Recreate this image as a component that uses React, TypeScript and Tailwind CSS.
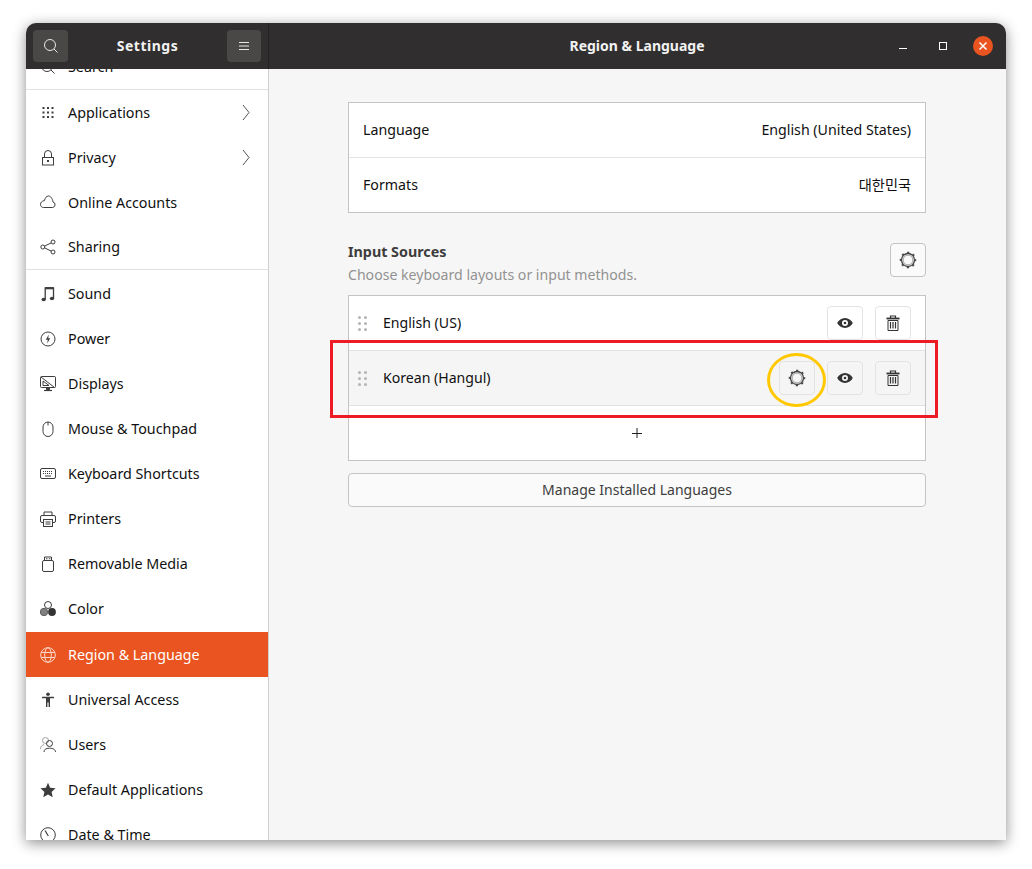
import type { ReactNode } from "react";

const FONT = "font-['Noto_Sans','Noto_Sans_CJK_KR',sans-serif]";

function Ico({ children, className = "text-[#3d3d3d]" }: { children: ReactNode; className?: string }) {
  return (
    <svg width="16" height="16" viewBox="0 0 16 16" fill="none" stroke="currentColor" strokeWidth="1" className={`shrink-0 ${className}`}>
      {children}
    </svg>
  );
}

const icons: Record<string, ReactNode> = {
  search: (
    <>
      <circle cx="7" cy="7" r="5.500" />
      <path d="M11 11l3.500 3.500" />
    </>
  ),
  grid: (
    <g fill="currentColor" stroke="none">
      {[2, 6.500, 11].map((y) =>
        [2.500, 7, 11.500].map((x) => <rect key={`${x}-${y}`} x={x} y={y} width="2" height="2" />)
      )}
    </g>
  ),
  lock: (
    <>
      <rect x="2.500" y="7.500" width="11" height="7.500" />
      <path d="M4.500 7.500V4a3.500 3.500 0 0 1 7 0v3.500" />
      <rect x="7" y="10" width="2" height="2" fill="currentColor" stroke="none" />
    </>
  ),
  cloud: <path d="M3.500 12.500h9a2.800 2.800 0 0 0 .5-5.500C12.500 3.500 10.500 1 8.500 1 6.500 1 5 3 4.500 5.500 2 6 .5 7.500.5 9.300c0 2 1.300 3.200 3 3.200Z" />,
  share: (
    <>
      <circle cx="2.800" cy="8" r="2" />
      <circle cx="13" cy="3" r="2" />
      <circle cx="13" cy="13" r="2" />
      <path d="M4.600 7.100 11.200 3.900M4.600 8.900l6.600 3.200" />
    </>
  ),
  music: (
    <>
      <path d="M5.200 13V2h8.300v10" strokeWidth="1.300" />
      <path d="M5.200 2.200h8.300" strokeWidth="2.200" />
      <ellipse cx="3.700" cy="13.500" rx="2.200" ry="1.800" fill="currentColor" stroke="none" />
      <ellipse cx="12" cy="12.500" rx="2.200" ry="1.800" fill="currentColor" stroke="none" />
    </>
  ),
  power: (
    <>
      <circle cx="8" cy="8" r="7" />
      <path d="M8.800 3.500 5.800 8.800h2L7.200 12.500 10.200 7.200h-2Z" fill="currentColor" stroke="none" />
    </>
  ),
  display: (
    <>
      <rect x="0.500" y="0.500" width="15" height="11" rx="1" />
      <path d="M1 1l13.500 10.500M3 5v4.500h6Z" />
      <path d="M6.500 13.500h3V12h-3Z" fill="currentColor" />
      <path d="M4 14.500h8" strokeWidth="1.200" />
    </>
  ),
  mouse: (
    <>
      <rect x="3" y="1" width="10" height="14.500" rx="5" />
      <path d="M8 1v3.500" />
    </>
  ),
  keyboard: (
    <>
      <rect x="0.500" y="2.500" width="15" height="10" rx="1.500" />
      <path d="M3 5.500h10M3 7.500h10" strokeDasharray="1 1" />
      <path d="M5 10h6" />
    </>
  ),
  printer: (
    <>
      <path d="M4 4.500V1h8v3.500" />
      <rect x="0.500" y="4.500" width="15" height="7" rx="1.500" />
      <rect x="3.500" y="8.500" width="9" height="7" fill="#fff" />
      <path d="M5.500 11h5M5.500 13h5" />
    </>
  ),
  usb: (
    <>
      <rect x="2.500" y="4.500" width="11" height="11" rx="1.500" />
      <path d="M4.500 4.500V1h7v3.500" />
      <path d="M6 2.800h1.500M8.800 2.800h1.500" />
    </>
  ),
  color: (
    <>
      <circle cx="8" cy="4" r="3.500" />
      <circle cx="4" cy="11" r="3.700" fill="#808080" stroke="#5f5f5f" />
      <circle cx="12" cy="11" r="3.900" fill="#333333" stroke="none" />
    </>
  ),
  globe: (
    <>
      <circle cx="8" cy="8" r="7.300" />
      <ellipse cx="8" cy="8" rx="3.300" ry="7.300" />
      <path d="M1.200 5.500h13.600M1.200 10.500h13.600" />
    </>
  ),
  access: (
    <g fill="currentColor" stroke="none">
      <circle cx="8" cy="2.200" r="1.800" />
      <path d="M2 4.800h12v1.400H10V15H8.600v-4.500H7.400V15H6V6.200H2Z" />
    </g>
  ),
  users: (
    <>
      <circle cx="5.500" cy="3.500" r="3" stroke="#a0a0a0" />
      <path d="M0.500 12c0-2.500 1.500-4 3.500-4.300" stroke="#a0a0a0" />
      <circle cx="9.500" cy="6.500" r="3" />
      <path d="M4 15c0-2.500 2-3.800 5.500-3.800S15.500 12.500 15.500 15" />
    </>
  ),
  star: <path d="M8 .8l2.200 4.900 5.300.6-3.900 3.600 1.100 5.300L8 12.500l-4.700 2.700 1.100-5.300L.5 6.300l5.300-.6Z" fill="currentColor" stroke="none" />,
  clock: (
    <>
      <circle cx="8" cy="8" r="7.300" />
      <path d="M5 3.500l3.300 5.500" strokeWidth="1.200" />
    </>
  ),
};

function Chevron() {
  return (
    <svg width="8" height="17" viewBox="0 0 8 17" fill="none" stroke="#555555" className="shrink-0">
      <path d="M1 1l6 7.500-6 7.500" />
    </svg>
  );
}

function Row({ label, icon, arrow, active, line }: { label: string; icon: string; arrow?: boolean; active?: boolean; line?: boolean }) {
  return (
    <div
      className={`flex shrink-0 items-center pl-[14px] pr-[18px] text-[14.3px] ${
        active ? "h-[46px] border-t border-white bg-[#e95420] text-white" : "h-[45px] text-[#101010]"
      } ${line ? "border-b border-[#e1e1e1]" : ""}`}
    >
      <Ico className={active ? "text-[#fbd9cb]" : "text-[#3d3d3d]"}>{icons[icon]}</Ico>
      <span className="ml-[12px] flex-1">{label}</span>
      {arrow && <Chevron />}
    </div>
  );
}

function Gear() {
  return (
    <svg width="18" height="18" viewBox="0 0 18 18" fill="none" className="shrink-0">
      <circle cx="9" cy="9" r="6.500" stroke="#454545" strokeWidth="1.300" />
      <circle cx="9" cy="9" r="4.900" stroke="#a0a0a0" strokeWidth="1" />
      <circle cx="9" cy="9" r="7.500" stroke="#454545" strokeWidth="1.500" strokeDasharray="2.200 3.690" strokeDashoffset="1.100" />
    </svg>
  );
}

function Eye() {
  return (
    <svg width="16" height="16" viewBox="0 0 16 16" className="text-[#333333]">
      <path fillRule="evenodd" fill="currentColor" d="M8 3c3.500 0 6.300 2.300 7.800 5-1.500 2.700-4.300 5-7.800 5S1.700 10.700.2 8C1.700 5.300 4.500 3 8 3Zm0 2a3 3 0 1 0 0 6 3 3 0 0 0 0-6Zm0 1.700a1.300 1.300 0 1 1 0 2.600 1.300 1.300 0 0 1 0-2.600Z" />
    </svg>
  );
}

function Trash() {
  return (
    <svg width="16" height="16" viewBox="0 0 16 16" fill="none" stroke="#333333" className="shrink-0">
      <path d="M1.500 3.500h13" strokeWidth="1.800" />
      <path d="M5.500 3V1h5v2" strokeWidth="1.200" />
      <path d="M3 5.500h10V15.500H3Z" />
      <path d="M5.500 7v6.500M8 7v6.500M10.500 7v6.500" strokeWidth="1.200" />
    </svg>
  );
}

function IconBtn({ children }: { children: ReactNode }) {
  return (
    <div className="flex h-[34px] w-[36px] items-center justify-center rounded-[4px] border border-[#e3e3e3]">
      {children}
    </div>
  );
}

function Grip() {
  return (
    <div className="grid w-[9px] grid-cols-2 gap-x-[3px] gap-y-[3px]">
      {[0, 1, 2, 3, 4, 5].map((i) => (
        <div key={i} className="h-[3px] w-[3px] rounded-full bg-[#b4b4b4]" />
      ))}
    </div>
  );
}

function SourceRow({ label, gear, hover }: { label: string; gear?: boolean; hover?: boolean }) {
  return (
    <div className={`flex h-[55px] items-center pl-[9px] pr-[14px] ${hover ? "border-b border-[#e3e3e3] bg-[#f5f5f5]" : "border-b border-[#e3e3e3]"}`}>
      <Grip />
      <span className="ml-[16px] flex-1 text-[14.1px] text-[#101010]">{label}</span>
      <div className="flex gap-[12px]">
        {gear && (
          <IconBtn>
            <Gear />
          </IconBtn>
        )}
        <IconBtn>
          <Eye />
        </IconBtn>
        <IconBtn>
          <Trash />
        </IconBtn>
      </div>
    </div>
  );
}

export default function App() {
  return (
    <div className={`relative h-[869px] w-[1032px] overflow-hidden bg-white pl-[26px] pt-[23px] ${FONT}`}>
      <div className="flex h-[817px] w-[980px] flex-col overflow-hidden rounded-t-[10px] bg-[#f6f6f6] shadow-[0_3px_14px_rgba(0,0,0,0.45)]">
        {/* title bar */}
        <div className="flex h-[46px] shrink-0 bg-[#302e2e] text-white">
          <div className="flex w-[243px] items-center justify-between border-r border-[#222222] px-[7px]">
            <div className="flex h-[32px] w-[35px] items-center justify-center rounded-[4px] bg-[#4a4847]">
              <Ico className="text-[#e8e8e8]">{icons.search}</Ico>
            </div>
            <span className="pb-[2px] text-[14px] font-bold tracking-[0.5px] text-[#f2f2f2]">Settings</span>
            <div className="flex h-[32px] w-[34px] items-center justify-center rounded-[4px] bg-[#4a4847]">
              <svg width="12" height="10" viewBox="0 0 12 10" stroke="#e8e8e8">
                <path d="M1 1.500h10M1 5h10M1 8.500h10" />
              </svg>
            </div>
          </div>
          <div className="flex flex-1 items-center pl-[253px] pr-[13px]">
            <span className="w-[230px] pb-[2px] text-center text-[14px] font-bold text-[#f2f2f2]">Region &amp; Language</span>
            <div className="ml-auto flex items-center">
              <div className="mt-[5px] h-px w-[8px] bg-white" />
              <div className="ml-[32px] h-[8px] w-[8px] border border-white" />
              <div className="ml-[26px] flex h-[20px] w-[20px] items-center justify-center rounded-full bg-[#e95420]">
                <svg width="10" height="10" viewBox="0 0 10 10" stroke="#fff" strokeWidth="1.500">
                  <path d="M1.500 1.500l7 7M8.500 1.500l-7 7" />
                </svg>
              </div>
            </div>
          </div>
        </div>

        <div className="flex min-h-0 flex-1">
          {/* sidebar */}
          <div className="flex w-[243px] shrink-0 flex-col overflow-hidden border-r border-[#cfcfcf] bg-white">
            <div className="mt-[-24px] flex flex-col">
              <Row label="Search" icon="search" line />
              <Row label="Applications" icon="grid" arrow />
              <Row label="Privacy" icon="lock" arrow />
              <Row label="Online Accounts" icon="cloud" />
              <div className="h-[46px] shrink-0">
                <Row label="Sharing" icon="share" line />
              </div>
              <Row label="Sound" icon="music" />
              <Row label="Power" icon="power" />
              <Row label="Displays" icon="display" />
              <Row label="Mouse & Touchpad" icon="mouse" />
              <Row label="Keyboard Shortcuts" icon="keyboard" />
              <Row label="Printers" icon="printer" />
              <Row label="Removable Media" icon="usb" />
              <Row label="Color" icon="color" />
              <Row label="Region & Language" icon="globe" active />
              <Row label="Universal Access" icon="access" />
              <Row label="Users" icon="users" />
              <Row label="Default Applications" icon="star" />
              <Row label="Date & Time" icon="clock" />
            </div>
          </div>

          {/* content */}
          <div className="ml-[79px] w-[578px] shrink-0 pt-[33px]">
            <div className="border border-[#c4c4c4] bg-white text-[14.2px] text-[#101010]">
              <div className="flex h-[55px] items-center justify-between border-b border-[#e3e3e3] px-[14px]">
                <span>Language</span>
                <span>English (United States)</span>
              </div>
              <div className="flex h-[54px] items-center justify-between px-[14px]">
                <span>Formats</span>
                <span>대한민국</span>
              </div>
            </div>

            <div className="mt-[30px] flex h-[34px] items-center justify-between">
              <div className="pt-[6px]">
                <div className="text-[14.3px] font-bold leading-[20px] text-[#3d3d3d]">Input Sources</div>
                <div className="mt-[3px] text-[14.1px] leading-[20px] text-[#929292]">Choose keyboard layouts or input methods.</div>
              </div>
              <div className="flex h-[34px] w-[36px] items-center justify-center rounded-[4px] border border-[#c4c4c4] bg-[#fafafa]">
                <Gear />
              </div>
            </div>

            <div className="mt-[18px] border border-[#c4c4c4] bg-white">
              <SourceRow label="English (US)" />
              <SourceRow label="Korean (Hangul)" gear hover />
              <div className="flex h-[54px] items-center justify-center text-[#222222]">
                <svg width="12" height="12" viewBox="0 0 12 12" stroke="currentColor">
                  <path d="M1 6.500h10M6 1v10" />
                </svg>
              </div>
            </div>

            <div className="mt-[12px] flex h-[34px] items-center justify-center rounded-[4px] border border-[#c4c4c4] bg-[#fafafa] pb-[2px] text-[14px] text-[#3d3d3d]">
              Manage Installed Languages
            </div>
          </div>
        </div>
      </div>

      {/* annotations drawn over the screenshot */}
      <div className="absolute left-[330px] top-[340px] h-[78px] w-[608px] border-[3px] border-[#ed1c24]" />
      <div className="absolute left-[767px] top-[353px] h-[54px] w-[59px] rounded-[50%] border-[3px] border-[#ffc800]" />
    </div>
  );
}
